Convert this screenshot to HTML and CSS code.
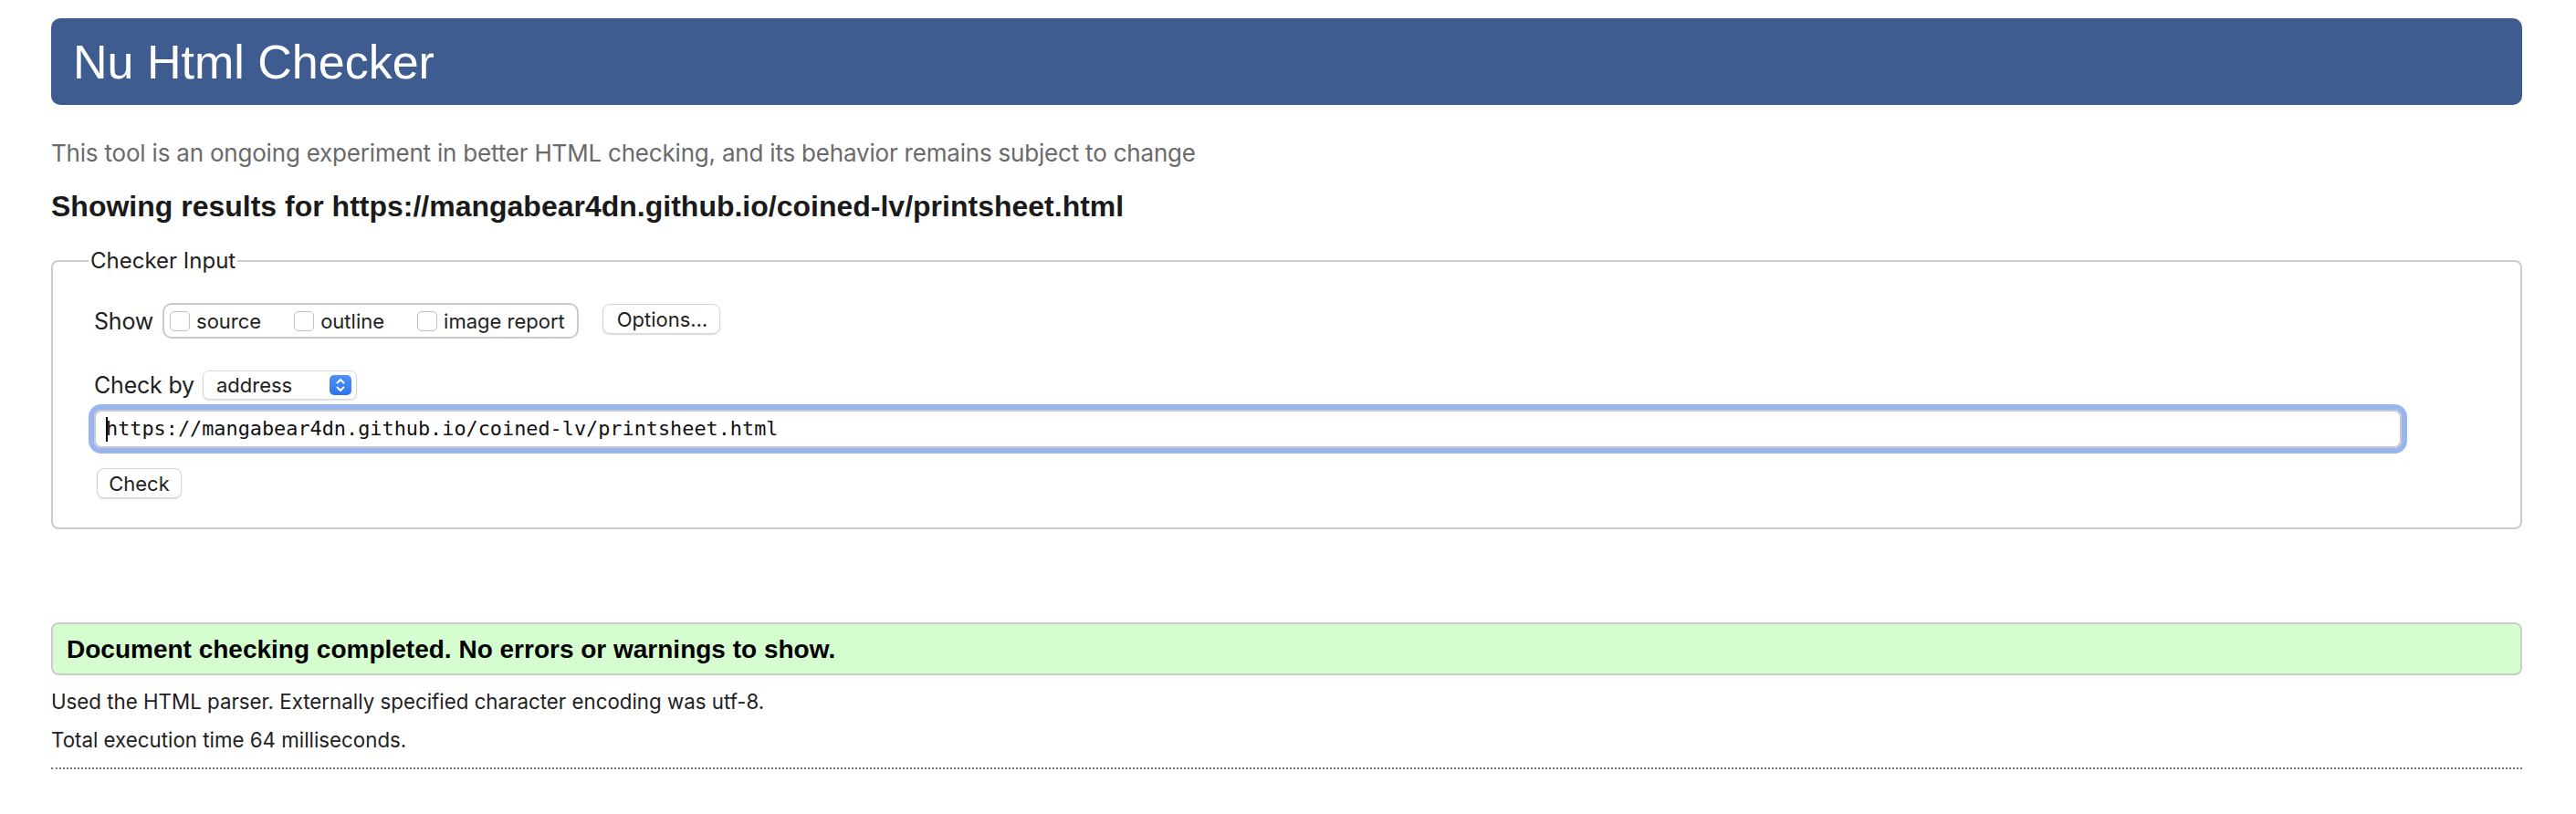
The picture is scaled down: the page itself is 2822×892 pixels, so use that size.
FILE: index.html
```html
<!DOCTYPE html>
<html lang="en">
<head>
<meta charset="utf-8">
<title>Nu Html Checker</title>
<link rel="stylesheet" href="styles.css">
</head>
<body>
<h1 class="title">Nu Html Checker</h1>
<p class="intro">This tool is an ongoing experiment in better HTML checking, and its behavior remains subject to change</p>
<p class="showing">Showing results for https://mangabear4dn.github.io/coined-lv/printsheet.html</p>
<form class="checker">
  <fieldset class="input-set">
    <legend>Checker Input</legend>
    <div class="row show-row">
      <span class="lbl">Show</span>
      <div class="show-opts">
        <label class="opt"><span class="box"></span>source</label>
        <label class="opt"><span class="box"></span>outline</label>
        <label class="opt"><span class="box"></span>image report</label>
      </div>
      <button type="button" class="btn options">Options…</button>
    </div>
    <div class="row checkby-row">
      <span class="lbl">Check by</span>
      <div class="select">
        <span class="sel-text">address</span>
        <span class="sel-arrows">
          <svg width="24" height="22" viewBox="0 0 24 22"><path d="M8.5 8.5 L12 5 L15.5 8.5 M8.5 13.5 L12 17 L15.5 13.5" fill="none" stroke="#fff" stroke-width="2" stroke-linecap="round" stroke-linejoin="round"/></svg>
        </span>
      </div>
    </div>
    <div class="url"><span class="caret"></span>https://mangabear4dn.github.io/coined-lv/printsheet.html</div>
    <button type="button" class="btn check">Check</button>
  </fieldset>
</form>
<div class="success"><h2>Document checking completed. No errors or warnings to show.</h2></div>
<p class="details first">Used the HTML parser. Externally specified character encoding was utf-8.</p>
<p class="details">Total execution time 64 milliseconds.</p>
<hr class="dots">
</body>
</html>
```
FILE: styles.css
```css
* { box-sizing: border-box; }
html, body { margin: 0; background: #fff; }
body {
  padding: 20px 59px 40px 56px;
  font-family: Inter, "Noto Sans", sans-serif;
  color: #222;
}
.title {
  margin: 0;
  height: 95px;
  padding: 2px 0 0 24px;
  background: #3e5c8f;
  color: #fff;
  font: 400 52px/93px "Liberation Sans", Arial, sans-serif;
  border-radius: 10px;
}
.intro {
  margin: 37px 0 0;
  font-size: 26px;
  line-height: 32px;
  letter-spacing: -0.2px;
  color: #6a6a6a;
}
.showing {
  margin: 24px 0 0;
  font: 700 32px/36px "Liberation Sans", Arial, sans-serif;
  color: #1a1a1a;
}
.checker { margin: 27px 0 0; }
.input-set {
  margin: 0;
  border: 2px solid #cccccc;
  border-radius: 8px;
  padding: 31px 0 32px 45px;
  min-width: 0;
}
.input-set legend {
  margin-left: -6px;
  padding: 0 2px;
  font-size: 24px;
  line-height: 30px;
  color: #222;
}
.row { display: flex; align-items: center; }
.lbl { font-size: 25px; letter-spacing: -0.2px; color: #222; }
.show-row { height: 39px; }
.show-row .lbl { margin-right: 10px; }
.show-opts {
  display: flex;
  align-items: center;
  height: 39px;
  border: 2px solid #cacaca;
  border-radius: 10px;
  padding: 0 13px 0 6px;
  gap: 36px;
}
.opt {
  display: flex;
  align-items: center;
  font-size: 22px;
  color: #222;
}
.box {
  width: 22px;
  height: 22px;
  margin-right: 7px;
  border: 1px solid #bdbdbd;
  border-radius: 5px;
  background: #fff;
}
.btn {
  height: 33px;
  padding: 0 15px;
  border: 1px solid #d4d4d4;
  border-radius: 8px;
  background: #fff;
  box-shadow: 0 1px 2px rgba(0,0,0,0.14);
  font-family: Inter, "Noto Sans", sans-serif;
  font-size: 22px;
  color: #222;
}
.options { margin-left: 26px; margin-bottom: 4px; width: 129px; }
.checkby-row { margin-top: 35px; height: 32px; }
.checkby-row .lbl { margin-right: 9px; }
.select {
  display: flex;
  align-items: center;
  justify-content: space-between;
  width: 169px;
  height: 32px;
  padding: 0 5px 0 14px;
  border: 1px solid #d8d8d8;
  border-radius: 7px;
  background: #fff;
  box-shadow: 0 1px 2px rgba(0,0,0,0.12);
  font-size: 22px;
}
.sel-arrows {
  display: flex;
  width: 24px;
  height: 22px;
  border-radius: 5px;
  background: linear-gradient(#4d92f8, #2f74ee);
}
.url {
  display: flex;
  align-items: center;
  width: calc(100% - 130px);
  height: 42px;
  margin-top: 11px;
  padding-left: 11px;
  border: 2px solid #c9c9c9;
  border-radius: 8px;
  box-shadow: 0 0 0 6px #98b4f2;
  font: 21.85px/38px "DejaVu Sans Mono", "Liberation Mono", monospace;
  color: #111;
  white-space: nowrap;
}
.caret {
  display: inline-block;
  width: 2px;
  height: 27px;
  margin-right: -2px;
  background: #000;
}
.check { display: block; margin: 22px 0 0 3px; width: 93px; padding: 0; }
.success {
  margin-top: 102px;
  border: 2px solid #cccccc;
  border-radius: 8px;
  background: #d6fdd0;
  padding: 12px 15px 11px;
}
.success h2 {
  margin: 0;
  font: 700 28px/31px "Liberation Sans", Arial, sans-serif;
  color: #000;
}
.details {
  margin: 12px 0 0;
  font-size: 22.3px;
  line-height: 30px;
  color: #222;
}
.details.first { margin-top: 14px; }
.dots {
  margin: 15px 0 0;
  height: 0;
  border: 0;
  border-top: 2px dotted #777;
}
```
